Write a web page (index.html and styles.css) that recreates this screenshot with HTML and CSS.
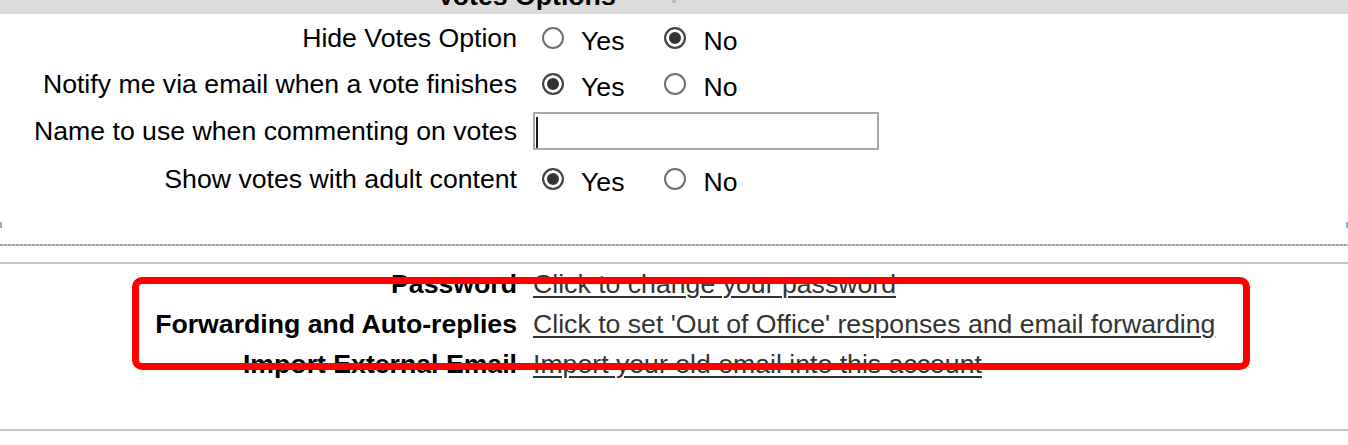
FILE: index.html
```html
<!DOCTYPE html>
<html lang="en">
<head>
<meta charset="utf-8">
<title>Votes Options</title>
<link rel="stylesheet" href="styles.css">
</head>
<body>
<div class="page">
  <section class="votes">
    <div class="votes-head">
      <span class="votes-title">Votes Options</span>
      <span class="head-mark"></span>
    </div>
    <div class="form-grid">
      <div class="label">Hide Votes Option</div>
      <div class="value">
        <label class="opt"><input type="radio" name="hide"><span class="opt-text">Yes</span></label>
        <label class="opt"><input type="radio" name="hide" checked><span class="opt-text">No</span></label>
      </div>

      <div class="label">Notify me via email when a vote finishes</div>
      <div class="value">
        <label class="opt"><input type="radio" name="notify" checked><span class="opt-text">Yes</span></label>
        <label class="opt"><input type="radio" name="notify"><span class="opt-text">No</span></label>
      </div>

      <div class="label">Name to use when commenting on votes</div>
      <div class="value">
        <input class="text-input" type="text" value="">
      </div>

      <div class="label">Show votes with adult content</div>
      <div class="value">
        <label class="opt"><input type="radio" name="adult" checked><span class="opt-text">Yes</span></label>
        <label class="opt"><input type="radio" name="adult"><span class="opt-text">No</span></label>
      </div>
    </div>
  </section>

  <div class="rule-dotted"></div>
  <div class="rule-solid"></div>

  <section class="account">
    <div class="account-grid">
      <div class="label strong">Password</div>
      <div class="value"><a class="link" href="#">Click to change your password</a></div>
      <div class="label strong">Forwarding and Auto-replies</div>
      <div class="value"><a class="link" href="#">Click to set 'Out of Office' responses and email forwarding</a></div>
      <div class="label strong">Import External Email</div>
      <div class="value"><a class="link" href="#">Import your old email into this account</a></div>
    </div>
  </section>

  <div class="rule-bottom"></div>

  <div class="highlight"></div>
</div>
</body>
</html>
```

FILE: styles.css
```css
html, body {
  margin: 0;
  padding: 0;
  background: #ffffff;
}

.page {
  position: relative;
  width: 1348px;
  height: 445px;
  overflow: hidden;
  font-family: "Liberation Sans", Arial, sans-serif;
  font-size: 26.67px;
  color: #000;
}

/* ---------- Votes box ---------- */
.votes {
  position: relative;
  padding-bottom: 24px;
}

.votes::before,
.votes::after {
  content: "";
  position: absolute;
  bottom: 0;
  width: 2px;
  height: 6px;
  background: #8fb0cf;
}
.votes::before { left: 0; }
.votes::after { right: 0; }

.votes-head {
  position: relative;
  height: 14px;
  background: #dcdcdc;
  overflow: hidden;
  padding-left: 437px;
}

.votes-title {
  display: block;
  margin-top: -19px;
  line-height: 30px;
  font-weight: bold;
  color: #000;
}

.head-mark {
  position: absolute;
  left: 672px;
  top: 0;
  width: 4px;
  height: 3px;
  background: #a9bfd6;
}

.form-grid {
  display: grid;
  grid-template-columns: 517px 1fr;
  grid-template-rows: 44px 48px 46px 50px;
  column-gap: 16px;
  padding-top: 2px;
}

.label {
  display: flex;
  align-items: center;
  justify-content: flex-end;
  white-space: nowrap;
}

.label.strong {
  font-weight: bold;
}

.value {
  display: flex;
  align-items: center;
  white-space: nowrap;
}

.opt {
  display: flex;
  align-items: center;
}

.opt + .opt {
  margin-left: 40px;
}

.opt input[type="radio"] {
  appearance: none;
  -webkit-appearance: none;
  box-sizing: border-box;
  width: 22px;
  height: 22px;
  margin: 0 0 0 9px;
  border: 2px solid #6f6f6f;
  border-radius: 50%;
  background: #fff;
}

.opt + .opt input[type="radio"] {
  margin-left: 0;
}

.opt input[type="radio"]:checked {
  border: 2px solid #454545;
  background: #333;
  box-shadow: inset 0 0 0 3px #fff;
}

.opt-text {
  margin-left: 17px;
  padding-top: 7px;
}

.text-input {
  box-sizing: border-box;
  width: 346px;
  height: 38px;
  margin: 0;
  border: 2px solid #a8a8a8;
  border-radius: 1px;
  background: #fff linear-gradient(#1a1a1a, #1a1a1a) no-repeat 1px 3px / 2px 31px;
  font: inherit;
  outline: none;
}

/* ---------- Rules ---------- */
.rule-dotted {
  margin-top: 16px;
  height: 2px;
  background: repeating-linear-gradient(90deg, #a3a3a3 0 3px, #cfcfcf 3px 4px);
}

.rule-solid {
  margin-top: 16px;
  height: 2px;
  background: #c4c4c4;
}

.rule-bottom {
  height: 2px;
  background: #c4c4c4;
}

/* ---------- Account links ---------- */
.account {
  padding-bottom: 45px;
}

.account-grid {
  display: grid;
  grid-template-columns: 517px 1fr;
  grid-auto-rows: 40px;
  column-gap: 16px;
}

.link {
  color: #333;
  text-decoration: underline;
  text-decoration-thickness: 2px;
  text-underline-offset: 3px;
}

/* ---------- Annotation overlay ---------- */
.highlight {
  position: absolute;
  left: 132px;
  top: 277px;
  width: 1118px;
  height: 93px;
  box-sizing: border-box;
  border: 7px solid #ff0000;
  border-radius: 10px;
  pointer-events: none;
}
```
